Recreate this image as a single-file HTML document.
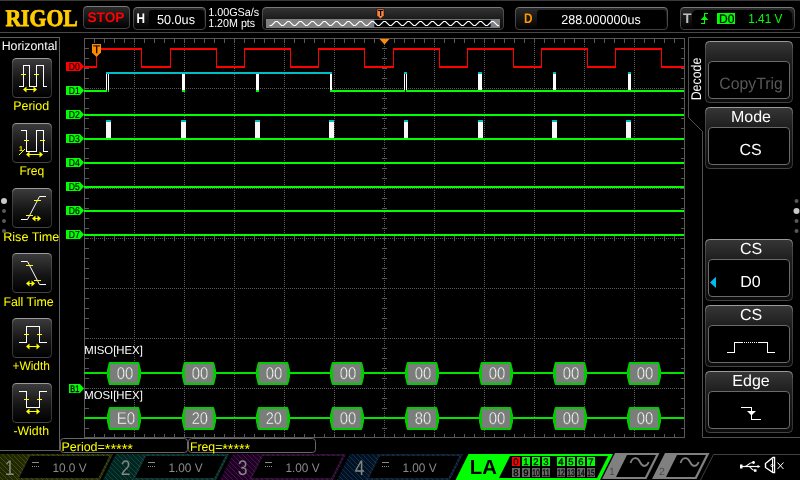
<!DOCTYPE html>
<html lang="en"><head><meta charset="utf-8"><title>RIGOL</title>
<style>
html,body{margin:0;padding:0;background:#000;width:800px;height:480px;overflow:hidden}
svg{display:block;position:absolute;left:0;top:0;will-change:transform}
text{font-family:"Liberation Sans",sans-serif;text-rendering:geometricPrecision}
.c{shape-rendering:crispEdges}
</style></head><body>
<svg width="800" height="480" viewBox="0 0 800 480">
<defs>
<linearGradient id="gbtn" x1="0" y1="0" x2="0" y2="1"><stop offset="0" stop-color="#3c3c3c"/><stop offset="0.55" stop-color="#151515"/><stop offset="1" stop-color="#000"/></linearGradient>
<linearGradient id="ghdr" x1="0" y1="0" x2="0" y2="1"><stop offset="0" stop-color="#2c2c2c"/><stop offset="1" stop-color="#000"/></linearGradient>
<linearGradient id="gmem" x1="0" y1="0" x2="0" y2="1"><stop offset="0" stop-color="#343434"/><stop offset="0.5" stop-color="#1c1c1c"/><stop offset="1" stop-color="#0a0a0a"/></linearGradient>
<linearGradient id="gmenu" x1="0" y1="0" x2="0" y2="1"><stop offset="0" stop-color="#363636"/><stop offset="0.33" stop-color="#1e1e1e"/><stop offset="1" stop-color="#0c0c0c"/></linearGradient>
<linearGradient id="ghb" x1="0" y1="0" x2="0" y2="1"><stop offset="0" stop-color="#7a7a7a"/><stop offset="0.15" stop-color="#505050"/><stop offset="1" stop-color="#404040"/></linearGradient>
<linearGradient id="gbord" x1="0" y1="0" x2="0" y2="1"><stop offset="0" stop-color="#9a9a9a"/><stop offset="0.12" stop-color="#4a4a4a"/><stop offset="0.9" stop-color="#333"/><stop offset="1" stop-color="#444"/></linearGradient>
<pattern id="h1" width="5" height="5" patternUnits="userSpaceOnUse" shape-rendering="crispEdges"><rect width="5" height="5" fill="#202800"/><rect x="3" y="0" width="1" height="1" fill="#424818"/><rect x="4" y="1" width="1" height="1" fill="#424818"/><rect x="0" y="2" width="1" height="1" fill="#424818"/><rect x="1" y="3" width="1" height="1" fill="#424818"/><rect x="2" y="4" width="1" height="1" fill="#424818"/></pattern>
<pattern id="h2" width="5" height="5" patternUnits="userSpaceOnUse" shape-rendering="crispEdges"><rect width="5" height="5" fill="#002620"/><rect x="3" y="0" width="1" height="1" fill="#184242"/><rect x="4" y="1" width="1" height="1" fill="#184242"/><rect x="0" y="2" width="1" height="1" fill="#184242"/><rect x="1" y="3" width="1" height="1" fill="#184242"/><rect x="2" y="4" width="1" height="1" fill="#184242"/></pattern>
<pattern id="h3" width="5" height="5" patternUnits="userSpaceOnUse" shape-rendering="crispEdges"><rect width="5" height="5" fill="#200024"/><rect x="3" y="0" width="1" height="1" fill="#401646"/><rect x="4" y="1" width="1" height="1" fill="#401646"/><rect x="0" y="2" width="1" height="1" fill="#401646"/><rect x="1" y="3" width="1" height="1" fill="#401646"/><rect x="2" y="4" width="1" height="1" fill="#401646"/></pattern>
<pattern id="h4" width="5" height="5" patternUnits="userSpaceOnUse" shape-rendering="crispEdges"><rect width="5" height="5" fill="#001224"/><rect x="3" y="0" width="1" height="1" fill="#163046"/><rect x="4" y="1" width="1" height="1" fill="#163046"/><rect x="0" y="2" width="1" height="1" fill="#163046"/><rect x="1" y="3" width="1" height="1" fill="#163046"/><rect x="2" y="4" width="1" height="1" fill="#163046"/></pattern>
</defs>
<rect width="800" height="480" fill="#000"/>

<rect x="0" y="0" width="800" height="1" fill="#3a3a3a" class="c"/>
<rect x="0" y="32" width="800" height="1" fill="#484848" class="c"/>
<text x="5.4" y="26" font-size="24" fill="#ffcc00" font-weight="bold" textLength="72.4" lengthAdjust="spacingAndGlyphs" style='font-family:"Liberation Serif",serif' stroke="#ffcc00" stroke-width="0.8" stroke-linejoin="round">RIGOL</text>
<rect x="83.5" y="6.5" width="46" height="22" rx="3.5" fill="url(#ghdr)" stroke="url(#ghb)"/>
<text x="87.5" y="22" font-size="14" fill="#ff0000" font-weight="bold" textLength="37" lengthAdjust="spacingAndGlyphs">STOP</text>
<rect x="133.5" y="7.5" width="72" height="22" rx="3.5" fill="url(#ghdr)" stroke="url(#ghb)"/>
<rect x="149" y="10" width="55" height="18" rx="3" fill="#000"/>
<text x="136.5" y="23" font-size="14" fill="#fff" font-weight="bold" textLength="8.5" lengthAdjust="spacingAndGlyphs">H</text>
<text x="157" y="24" font-size="13" fill="#fff" textLength="38" lengthAdjust="spacingAndGlyphs">50.0us</text>
<text x="208.2" y="16" font-size="11.5" fill="#fff" textLength="51" lengthAdjust="spacingAndGlyphs">1.00GSa/s</text>
<text x="208.2" y="27" font-size="11.5" fill="#fff" textLength="47" lengthAdjust="spacingAndGlyphs">1.20M pts</text>
<rect x="262.5" y="7.5" width="241" height="22" rx="3.5" fill="url(#gmem)" stroke="url(#ghb)"/>
<rect x="266" y="19" width="108" height="9" fill="#808080" class="c"/>
<rect x="374" y="19" width="116" height="9" fill="#000" class="c"/>
<rect x="374" y="19" width="116" height="1" fill="#707070" class="c"/>
<rect x="374" y="27" width="116" height="1" fill="#707070" class="c"/>
<rect x="490" y="19" width="10" height="9" fill="#808080" class="c"/>
<rect x="374" y="20" width="1" height="7" fill="#103060" class="c"/>
<rect x="490" y="20" width="1" height="7" fill="#103060" class="c"/>
<clipPath id="cw"><rect x="267" y="19" width="232" height="9"/></clipPath>
<polyline clip-path="url(#cw)" fill="none" stroke="#fff" stroke-width="1.1" points="269.5,25.5 271.5,25.5 275.5,21.5 277.5,21.5 281.5,25.5 283.5,25.5 287.5,21.5 289.5,21.5 293.5,25.5 295.5,25.5 299.5,21.5 301.5,21.5 305.5,25.5 307.5,25.5 311.5,21.5 313.5,21.5 317.5,25.5 319.5,25.5 323.5,21.5 325.5,21.5 329.5,25.5 331.5,25.5 335.5,21.5 337.5,21.5 341.5,25.5 343.5,25.5 347.5,21.5 349.5,21.5 353.5,25.5 355.5,25.5 359.5,21.5 361.5,21.5 365.5,25.5 367.5,25.5 371.5,21.5 373.5,21.5 377.5,25.5 379.5,25.5 383.5,21.5 385.5,21.5 389.5,25.5 391.5,25.5 395.5,21.5 397.5,21.5 401.5,25.5 403.5,25.5 407.5,21.5 409.5,21.5 413.5,25.5 415.5,25.5 419.5,21.5 421.5,21.5 425.5,25.5 427.5,25.5 431.5,21.5 433.5,21.5 437.5,25.5 439.5,25.5 443.5,21.5 445.5,21.5 449.5,25.5 451.5,25.5 455.5,21.5 457.5,21.5 461.5,25.5 463.5,25.5 467.5,21.5 469.5,21.5 473.5,25.5 475.5,25.5 479.5,21.5 481.5,21.5 485.5,25.5 487.5,25.5 491.5,21.5 493.5,21.5 497.5,25.5 499.5,25.5"/>
<path d="M377,9 H384 V15.5 L380.5,19 L377,15.5 Z" fill="#ff8440" stroke="#1a0a00" stroke-width="0.6"/>
<text x="380.5" y="16.4" font-size="8.6" fill="#000" font-weight="bold" text-anchor="middle">T</text>
<rect x="515.5" y="7.5" width="152" height="22" rx="3.5" fill="url(#ghdr)" stroke="url(#ghb)"/>
<rect x="537" y="10" width="129" height="18" rx="3" fill="#000"/>
<text x="524" y="23" font-size="14" fill="#ff9900" font-weight="bold" textLength="8.5" lengthAdjust="spacingAndGlyphs">D</text>
<text x="561.2" y="24" font-size="13" fill="#fff" textLength="79.6" lengthAdjust="spacingAndGlyphs">288.000000us</text>
<rect x="680.5" y="7.5" width="114" height="22" rx="3.5" fill="url(#ghdr)" stroke="url(#ghb)"/>
<rect x="692" y="10" width="100" height="18" rx="5" fill="#000"/>
<text x="683" y="23" font-size="14" fill="#c0c0c0" font-weight="bold" textLength="8.5" lengthAdjust="spacingAndGlyphs">T</text>
<path class="c" d="M701,23.5 H704.5 V13.5 H708" fill="none" stroke="#00ff00" stroke-width="1"/>
<path d="M700.7,20 L704.5,15.8 L708.3,20 Z" fill="#00ff00"/>
<rect x="717" y="13" width="18" height="11" fill="#00ff00" class="c"/>
<text x="726.7" y="22.8" font-size="12.3" fill="#000" textLength="15.4" lengthAdjust="spacingAndGlyphs" text-anchor="middle" stroke="#000" stroke-width="0.2">D0</text>
<text x="748.3" y="23" font-size="13" fill="#00ff00" textLength="34" lengthAdjust="spacingAndGlyphs">1.41 V</text>
<path class="c" d="M0,37.5 H59.5 V450.5 H0" fill="none" stroke="#606060"/>
<text x="1.7" y="50" font-size="12.5" fill="#fff" textLength="55.6" lengthAdjust="spacingAndGlyphs">Horizontal</text>
<rect x="12.5" y="58.5" width="39" height="39" rx="3.5" fill="url(#gbtn)" stroke="url(#gbord)"/>
<text x="13.2" y="110" font-size="12.5" fill="#ffff00" textLength="36" lengthAdjust="spacingAndGlyphs">Period</text>
<rect x="12.5" y="123.5" width="39" height="39" rx="3.5" fill="url(#gbtn)" stroke="url(#gbord)"/>
<text x="19.4" y="175" font-size="12.5" fill="#ffff00" textLength="24.8" lengthAdjust="spacingAndGlyphs">Freq</text>
<rect x="12.5" y="188.5" width="39" height="39" rx="3.5" fill="url(#gbtn)" stroke="url(#gbord)"/>
<text x="3.2" y="241" font-size="12.5" fill="#ffff00" textLength="56.2" lengthAdjust="spacingAndGlyphs">Rise Time</text>
<rect x="12.5" y="253.5" width="39" height="39" rx="3.5" fill="url(#gbtn)" stroke="url(#gbord)"/>
<text x="3.4" y="306" font-size="12.5" fill="#ffff00" textLength="50.2" lengthAdjust="spacingAndGlyphs">Fall Time</text>
<rect x="12.5" y="318.5" width="39" height="39" rx="3.5" fill="url(#gbtn)" stroke="url(#gbord)"/>
<text x="12.4" y="370" font-size="12.5" fill="#ffff00" textLength="37.6" lengthAdjust="spacingAndGlyphs">+Width</text>
<rect x="12.5" y="383.5" width="39" height="39" rx="3.5" fill="url(#gbtn)" stroke="url(#gbord)"/>
<text x="13.4" y="435" font-size="12.5" fill="#ffff00" textLength="35.6" lengthAdjust="spacingAndGlyphs">-Width</text>
<path class="c" d="M19,86.5 H23.5 V65.5 H29.5 V86.5 H36.5 V65.5 H43.5 V86.5 H47" stroke="#fff" stroke-width="1" fill="none"/>
<path class="c" d="M21,74.5 H26 M34,74.5 H39" stroke="#ffff00" stroke-width="1" fill="none"/>
<path d="M23,89.5 L26.5,86.5 V92.5 Z M37,89.5 L33.5,86.5 V92.5 Z" fill="#ffff00"/>
<path class="c" d="M25,89.5 H35" stroke="#ffff00" stroke-width="1" fill="none"/>
<path class="c" d="M21,130.5 H26.5 V151.5 H36.5 V130.5 H43.5 V151.5 H48" stroke="#fff" stroke-width="1" fill="none"/>
<path class="c" d="M24,140.5 H29 M40,140.5 H45" stroke="#ffff00" stroke-width="1" fill="none"/>
<path d="M26,154.5 L29.5,151.5 V157.5 Z M43,154.5 L39.5,151.5 V157.5 Z" fill="#ffff00"/>
<path class="c" d="M28,154.5 H41" stroke="#ffff00" stroke-width="1" fill="none"/>
<text x="19" y="151.2" font-size="7" fill="#ffff00" font-weight="bold">1</text>
<path d="M19,155 L25,149" stroke="#ffff00" stroke-width="1" fill="none"/>
<path d="M21,219.5 H27.5 L39.5,196.5 H46" stroke="#fff" stroke-width="1" fill="none"/>
<path class="c" d="M34,200.5 H41 M26,215.5 H33" stroke="#ffff00" stroke-width="1" fill="none"/>
<path d="M32,218.5 L35.5,215.5 V221.5 Z M41,218.5 L37.5,215.5 V221.5 Z" fill="#ffff00"/>
<path class="c" d="M34,218.5 H39" stroke="#ffff00" stroke-width="1" fill="none"/>
<path d="M21,261.5 H27.5 L39.5,284.5 H46" stroke="#fff" stroke-width="1" fill="none"/>
<path class="c" d="M26,265.5 H33 M34,280.5 H41" stroke="#ffff00" stroke-width="1" fill="none"/>
<path d="M26,283.5 L29.5,280.5 V286.5 Z M35,283.5 L31.5,280.5 V286.5 Z" fill="#ffff00"/>
<path class="c" d="M28,283.5 H33" stroke="#ffff00" stroke-width="1" fill="none"/>
<path class="c" d="M19,342.5 H26.5 V326.5 H39.5 V342.5 H47" stroke="#fff" stroke-width="1" fill="none"/>
<path class="c" d="M24,334.5 H29 M37,334.5 H42" stroke="#ffff00" stroke-width="1" fill="none"/>
<path d="M26,346.5 L29.5,343.5 V349.5 Z M40,346.5 L36.5,343.5 V349.5 Z" fill="#ffff00"/>
<path class="c" d="M28,346.5 H38" stroke="#ffff00" stroke-width="1" fill="none"/>
<path class="c" d="M19,391.5 H26.5 V407.5 H39.5 V391.5 H47" stroke="#fff" stroke-width="1" fill="none"/>
<path class="c" d="M24,399.5 H29 M37,399.5 H42" stroke="#ffff00" stroke-width="1" fill="none"/>
<path d="M26,411.5 L29.5,408.5 V414.5 Z M40,411.5 L36.5,408.5 V414.5 Z" fill="#ffff00"/>
<path class="c" d="M28,411.5 H38" stroke="#ffff00" stroke-width="1" fill="none"/>
<circle cx="4" cy="201" r="3" fill="#c8c8c8"/>
<circle cx="4" cy="211" r="2" fill="#585858"/>
<circle cx="4" cy="221" r="2" fill="#585858"/>
<circle cx="4" cy="231" r="2" fill="#585858"/>
<circle cx="796.5" cy="211" r="3" fill="#c8c8c8"/>
<circle cx="796.5" cy="201" r="2" fill="#585858"/>
<circle cx="796.5" cy="221" r="2" fill="#585858"/>
<circle cx="796.5" cy="231" r="2" fill="#585858"/>
<g class="c">
<line x1="134.5" y1="38" x2="134.5" y2="438" stroke="#5a5a5a" stroke-width="1" stroke-dasharray="1 1"/>
<line x1="184.5" y1="38" x2="184.5" y2="438" stroke="#5a5a5a" stroke-width="1" stroke-dasharray="1 1"/>
<line x1="234.5" y1="38" x2="234.5" y2="438" stroke="#5a5a5a" stroke-width="1" stroke-dasharray="1 1"/>
<line x1="284.5" y1="38" x2="284.5" y2="438" stroke="#5a5a5a" stroke-width="1" stroke-dasharray="1 1"/>
<line x1="334.5" y1="38" x2="334.5" y2="438" stroke="#5a5a5a" stroke-width="1" stroke-dasharray="1 1"/>
<line x1="384.5" y1="38" x2="384.5" y2="438" stroke="#5a5a5a" stroke-width="1" stroke-dasharray="1 1"/>
<line x1="434.5" y1="38" x2="434.5" y2="438" stroke="#5a5a5a" stroke-width="1" stroke-dasharray="1 1"/>
<line x1="484.5" y1="38" x2="484.5" y2="438" stroke="#5a5a5a" stroke-width="1" stroke-dasharray="1 1"/>
<line x1="534.5" y1="38" x2="534.5" y2="438" stroke="#5a5a5a" stroke-width="1" stroke-dasharray="1 1"/>
<line x1="584.5" y1="38" x2="584.5" y2="438" stroke="#5a5a5a" stroke-width="1" stroke-dasharray="1 1"/>
<line x1="634.5" y1="38" x2="634.5" y2="438" stroke="#5a5a5a" stroke-width="1" stroke-dasharray="1 1"/>
<line x1="84" y1="88.5" x2="684" y2="88.5" stroke="#5a5a5a" stroke-width="1" stroke-dasharray="1 1"/>
<line x1="84" y1="138.5" x2="684" y2="138.5" stroke="#5a5a5a" stroke-width="1" stroke-dasharray="1 1"/>
<line x1="84" y1="188.5" x2="684" y2="188.5" stroke="#5a5a5a" stroke-width="1" stroke-dasharray="1 1"/>
<line x1="84" y1="238.5" x2="684" y2="238.5" stroke="#5a5a5a" stroke-width="1" stroke-dasharray="1 1"/>
<line x1="84" y1="288.5" x2="684" y2="288.5" stroke="#5a5a5a" stroke-width="1" stroke-dasharray="1 1"/>
<line x1="84" y1="338.5" x2="684" y2="338.5" stroke="#5a5a5a" stroke-width="1" stroke-dasharray="1 1"/>
<line x1="84" y1="388.5" x2="684" y2="388.5" stroke="#5a5a5a" stroke-width="1" stroke-dasharray="1 1"/>
<rect x="94" y="39" width="1" height="4" fill="#585858" />
<rect x="94" y="434" width="1" height="4" fill="#585858" />
<rect x="94" y="236" width="1" height="5" fill="#585858" />
<rect x="104" y="39" width="1" height="4" fill="#585858" />
<rect x="104" y="434" width="1" height="4" fill="#585858" />
<rect x="104" y="236" width="1" height="5" fill="#585858" />
<rect x="114" y="39" width="1" height="4" fill="#585858" />
<rect x="114" y="434" width="1" height="4" fill="#585858" />
<rect x="114" y="236" width="1" height="5" fill="#585858" />
<rect x="124" y="39" width="1" height="4" fill="#585858" />
<rect x="124" y="434" width="1" height="4" fill="#585858" />
<rect x="124" y="236" width="1" height="5" fill="#585858" />
<rect x="134" y="39" width="1" height="4" fill="#585858" />
<rect x="134" y="434" width="1" height="4" fill="#585858" />
<rect x="134" y="236" width="1" height="5" fill="#585858" />
<rect x="144" y="39" width="1" height="4" fill="#585858" />
<rect x="144" y="434" width="1" height="4" fill="#585858" />
<rect x="144" y="236" width="1" height="5" fill="#585858" />
<rect x="154" y="39" width="1" height="4" fill="#585858" />
<rect x="154" y="434" width="1" height="4" fill="#585858" />
<rect x="154" y="236" width="1" height="5" fill="#585858" />
<rect x="164" y="39" width="1" height="4" fill="#585858" />
<rect x="164" y="434" width="1" height="4" fill="#585858" />
<rect x="164" y="236" width="1" height="5" fill="#585858" />
<rect x="174" y="39" width="1" height="4" fill="#585858" />
<rect x="174" y="434" width="1" height="4" fill="#585858" />
<rect x="174" y="236" width="1" height="5" fill="#585858" />
<rect x="184" y="39" width="1" height="4" fill="#585858" />
<rect x="184" y="434" width="1" height="4" fill="#585858" />
<rect x="184" y="236" width="1" height="5" fill="#585858" />
<rect x="194" y="39" width="1" height="4" fill="#585858" />
<rect x="194" y="434" width="1" height="4" fill="#585858" />
<rect x="194" y="236" width="1" height="5" fill="#585858" />
<rect x="204" y="39" width="1" height="4" fill="#585858" />
<rect x="204" y="434" width="1" height="4" fill="#585858" />
<rect x="204" y="236" width="1" height="5" fill="#585858" />
<rect x="214" y="39" width="1" height="4" fill="#585858" />
<rect x="214" y="434" width="1" height="4" fill="#585858" />
<rect x="214" y="236" width="1" height="5" fill="#585858" />
<rect x="224" y="39" width="1" height="4" fill="#585858" />
<rect x="224" y="434" width="1" height="4" fill="#585858" />
<rect x="224" y="236" width="1" height="5" fill="#585858" />
<rect x="234" y="39" width="1" height="4" fill="#585858" />
<rect x="234" y="434" width="1" height="4" fill="#585858" />
<rect x="234" y="236" width="1" height="5" fill="#585858" />
<rect x="244" y="39" width="1" height="4" fill="#585858" />
<rect x="244" y="434" width="1" height="4" fill="#585858" />
<rect x="244" y="236" width="1" height="5" fill="#585858" />
<rect x="254" y="39" width="1" height="4" fill="#585858" />
<rect x="254" y="434" width="1" height="4" fill="#585858" />
<rect x="254" y="236" width="1" height="5" fill="#585858" />
<rect x="264" y="39" width="1" height="4" fill="#585858" />
<rect x="264" y="434" width="1" height="4" fill="#585858" />
<rect x="264" y="236" width="1" height="5" fill="#585858" />
<rect x="274" y="39" width="1" height="4" fill="#585858" />
<rect x="274" y="434" width="1" height="4" fill="#585858" />
<rect x="274" y="236" width="1" height="5" fill="#585858" />
<rect x="284" y="39" width="1" height="4" fill="#585858" />
<rect x="284" y="434" width="1" height="4" fill="#585858" />
<rect x="284" y="236" width="1" height="5" fill="#585858" />
<rect x="294" y="39" width="1" height="4" fill="#585858" />
<rect x="294" y="434" width="1" height="4" fill="#585858" />
<rect x="294" y="236" width="1" height="5" fill="#585858" />
<rect x="304" y="39" width="1" height="4" fill="#585858" />
<rect x="304" y="434" width="1" height="4" fill="#585858" />
<rect x="304" y="236" width="1" height="5" fill="#585858" />
<rect x="314" y="39" width="1" height="4" fill="#585858" />
<rect x="314" y="434" width="1" height="4" fill="#585858" />
<rect x="314" y="236" width="1" height="5" fill="#585858" />
<rect x="324" y="39" width="1" height="4" fill="#585858" />
<rect x="324" y="434" width="1" height="4" fill="#585858" />
<rect x="324" y="236" width="1" height="5" fill="#585858" />
<rect x="334" y="39" width="1" height="4" fill="#585858" />
<rect x="334" y="434" width="1" height="4" fill="#585858" />
<rect x="334" y="236" width="1" height="5" fill="#585858" />
<rect x="344" y="39" width="1" height="4" fill="#585858" />
<rect x="344" y="434" width="1" height="4" fill="#585858" />
<rect x="344" y="236" width="1" height="5" fill="#585858" />
<rect x="354" y="39" width="1" height="4" fill="#585858" />
<rect x="354" y="434" width="1" height="4" fill="#585858" />
<rect x="354" y="236" width="1" height="5" fill="#585858" />
<rect x="364" y="39" width="1" height="4" fill="#585858" />
<rect x="364" y="434" width="1" height="4" fill="#585858" />
<rect x="364" y="236" width="1" height="5" fill="#585858" />
<rect x="374" y="39" width="1" height="4" fill="#585858" />
<rect x="374" y="434" width="1" height="4" fill="#585858" />
<rect x="374" y="236" width="1" height="5" fill="#585858" />
<rect x="384" y="39" width="1" height="4" fill="#585858" />
<rect x="384" y="434" width="1" height="4" fill="#585858" />
<rect x="384" y="236" width="1" height="5" fill="#585858" />
<rect x="394" y="39" width="1" height="4" fill="#585858" />
<rect x="394" y="434" width="1" height="4" fill="#585858" />
<rect x="394" y="236" width="1" height="5" fill="#585858" />
<rect x="404" y="39" width="1" height="4" fill="#585858" />
<rect x="404" y="434" width="1" height="4" fill="#585858" />
<rect x="404" y="236" width="1" height="5" fill="#585858" />
<rect x="414" y="39" width="1" height="4" fill="#585858" />
<rect x="414" y="434" width="1" height="4" fill="#585858" />
<rect x="414" y="236" width="1" height="5" fill="#585858" />
<rect x="424" y="39" width="1" height="4" fill="#585858" />
<rect x="424" y="434" width="1" height="4" fill="#585858" />
<rect x="424" y="236" width="1" height="5" fill="#585858" />
<rect x="434" y="39" width="1" height="4" fill="#585858" />
<rect x="434" y="434" width="1" height="4" fill="#585858" />
<rect x="434" y="236" width="1" height="5" fill="#585858" />
<rect x="444" y="39" width="1" height="4" fill="#585858" />
<rect x="444" y="434" width="1" height="4" fill="#585858" />
<rect x="444" y="236" width="1" height="5" fill="#585858" />
<rect x="454" y="39" width="1" height="4" fill="#585858" />
<rect x="454" y="434" width="1" height="4" fill="#585858" />
<rect x="454" y="236" width="1" height="5" fill="#585858" />
<rect x="464" y="39" width="1" height="4" fill="#585858" />
<rect x="464" y="434" width="1" height="4" fill="#585858" />
<rect x="464" y="236" width="1" height="5" fill="#585858" />
<rect x="474" y="39" width="1" height="4" fill="#585858" />
<rect x="474" y="434" width="1" height="4" fill="#585858" />
<rect x="474" y="236" width="1" height="5" fill="#585858" />
<rect x="484" y="39" width="1" height="4" fill="#585858" />
<rect x="484" y="434" width="1" height="4" fill="#585858" />
<rect x="484" y="236" width="1" height="5" fill="#585858" />
<rect x="494" y="39" width="1" height="4" fill="#585858" />
<rect x="494" y="434" width="1" height="4" fill="#585858" />
<rect x="494" y="236" width="1" height="5" fill="#585858" />
<rect x="504" y="39" width="1" height="4" fill="#585858" />
<rect x="504" y="434" width="1" height="4" fill="#585858" />
<rect x="504" y="236" width="1" height="5" fill="#585858" />
<rect x="514" y="39" width="1" height="4" fill="#585858" />
<rect x="514" y="434" width="1" height="4" fill="#585858" />
<rect x="514" y="236" width="1" height="5" fill="#585858" />
<rect x="524" y="39" width="1" height="4" fill="#585858" />
<rect x="524" y="434" width="1" height="4" fill="#585858" />
<rect x="524" y="236" width="1" height="5" fill="#585858" />
<rect x="534" y="39" width="1" height="4" fill="#585858" />
<rect x="534" y="434" width="1" height="4" fill="#585858" />
<rect x="534" y="236" width="1" height="5" fill="#585858" />
<rect x="544" y="39" width="1" height="4" fill="#585858" />
<rect x="544" y="434" width="1" height="4" fill="#585858" />
<rect x="544" y="236" width="1" height="5" fill="#585858" />
<rect x="554" y="39" width="1" height="4" fill="#585858" />
<rect x="554" y="434" width="1" height="4" fill="#585858" />
<rect x="554" y="236" width="1" height="5" fill="#585858" />
<rect x="564" y="39" width="1" height="4" fill="#585858" />
<rect x="564" y="434" width="1" height="4" fill="#585858" />
<rect x="564" y="236" width="1" height="5" fill="#585858" />
<rect x="574" y="39" width="1" height="4" fill="#585858" />
<rect x="574" y="434" width="1" height="4" fill="#585858" />
<rect x="574" y="236" width="1" height="5" fill="#585858" />
<rect x="584" y="39" width="1" height="4" fill="#585858" />
<rect x="584" y="434" width="1" height="4" fill="#585858" />
<rect x="584" y="236" width="1" height="5" fill="#585858" />
<rect x="594" y="39" width="1" height="4" fill="#585858" />
<rect x="594" y="434" width="1" height="4" fill="#585858" />
<rect x="594" y="236" width="1" height="5" fill="#585858" />
<rect x="604" y="39" width="1" height="4" fill="#585858" />
<rect x="604" y="434" width="1" height="4" fill="#585858" />
<rect x="604" y="236" width="1" height="5" fill="#585858" />
<rect x="614" y="39" width="1" height="4" fill="#585858" />
<rect x="614" y="434" width="1" height="4" fill="#585858" />
<rect x="614" y="236" width="1" height="5" fill="#585858" />
<rect x="624" y="39" width="1" height="4" fill="#585858" />
<rect x="624" y="434" width="1" height="4" fill="#585858" />
<rect x="624" y="236" width="1" height="5" fill="#585858" />
<rect x="634" y="39" width="1" height="4" fill="#585858" />
<rect x="634" y="434" width="1" height="4" fill="#585858" />
<rect x="634" y="236" width="1" height="5" fill="#585858" />
<rect x="644" y="39" width="1" height="4" fill="#585858" />
<rect x="644" y="434" width="1" height="4" fill="#585858" />
<rect x="644" y="236" width="1" height="5" fill="#585858" />
<rect x="654" y="39" width="1" height="4" fill="#585858" />
<rect x="654" y="434" width="1" height="4" fill="#585858" />
<rect x="654" y="236" width="1" height="5" fill="#585858" />
<rect x="664" y="39" width="1" height="4" fill="#585858" />
<rect x="664" y="434" width="1" height="4" fill="#585858" />
<rect x="664" y="236" width="1" height="5" fill="#585858" />
<rect x="674" y="39" width="1" height="4" fill="#585858" />
<rect x="674" y="434" width="1" height="4" fill="#585858" />
<rect x="674" y="236" width="1" height="5" fill="#585858" />
<rect x="85" y="48" width="4" height="1" fill="#585858" />
<rect x="681" y="48" width="3" height="1" fill="#585858" />
<rect x="382" y="48" width="5" height="1" fill="#585858" />
<rect x="85" y="58" width="4" height="1" fill="#585858" />
<rect x="681" y="58" width="3" height="1" fill="#585858" />
<rect x="382" y="58" width="5" height="1" fill="#585858" />
<rect x="85" y="68" width="4" height="1" fill="#585858" />
<rect x="681" y="68" width="3" height="1" fill="#585858" />
<rect x="382" y="68" width="5" height="1" fill="#585858" />
<rect x="85" y="78" width="4" height="1" fill="#585858" />
<rect x="681" y="78" width="3" height="1" fill="#585858" />
<rect x="382" y="78" width="5" height="1" fill="#585858" />
<rect x="85" y="88" width="4" height="1" fill="#585858" />
<rect x="681" y="88" width="3" height="1" fill="#585858" />
<rect x="382" y="88" width="5" height="1" fill="#585858" />
<rect x="85" y="98" width="4" height="1" fill="#585858" />
<rect x="681" y="98" width="3" height="1" fill="#585858" />
<rect x="382" y="98" width="5" height="1" fill="#585858" />
<rect x="85" y="108" width="4" height="1" fill="#585858" />
<rect x="681" y="108" width="3" height="1" fill="#585858" />
<rect x="382" y="108" width="5" height="1" fill="#585858" />
<rect x="85" y="118" width="4" height="1" fill="#585858" />
<rect x="681" y="118" width="3" height="1" fill="#585858" />
<rect x="382" y="118" width="5" height="1" fill="#585858" />
<rect x="85" y="128" width="4" height="1" fill="#585858" />
<rect x="681" y="128" width="3" height="1" fill="#585858" />
<rect x="382" y="128" width="5" height="1" fill="#585858" />
<rect x="85" y="138" width="4" height="1" fill="#585858" />
<rect x="681" y="138" width="3" height="1" fill="#585858" />
<rect x="382" y="138" width="5" height="1" fill="#585858" />
<rect x="85" y="148" width="4" height="1" fill="#585858" />
<rect x="681" y="148" width="3" height="1" fill="#585858" />
<rect x="382" y="148" width="5" height="1" fill="#585858" />
<rect x="85" y="158" width="4" height="1" fill="#585858" />
<rect x="681" y="158" width="3" height="1" fill="#585858" />
<rect x="382" y="158" width="5" height="1" fill="#585858" />
<rect x="85" y="168" width="4" height="1" fill="#585858" />
<rect x="681" y="168" width="3" height="1" fill="#585858" />
<rect x="382" y="168" width="5" height="1" fill="#585858" />
<rect x="85" y="178" width="4" height="1" fill="#585858" />
<rect x="681" y="178" width="3" height="1" fill="#585858" />
<rect x="382" y="178" width="5" height="1" fill="#585858" />
<rect x="85" y="188" width="4" height="1" fill="#585858" />
<rect x="681" y="188" width="3" height="1" fill="#585858" />
<rect x="382" y="188" width="5" height="1" fill="#585858" />
<rect x="85" y="198" width="4" height="1" fill="#585858" />
<rect x="681" y="198" width="3" height="1" fill="#585858" />
<rect x="382" y="198" width="5" height="1" fill="#585858" />
<rect x="85" y="208" width="4" height="1" fill="#585858" />
<rect x="681" y="208" width="3" height="1" fill="#585858" />
<rect x="382" y="208" width="5" height="1" fill="#585858" />
<rect x="85" y="218" width="4" height="1" fill="#585858" />
<rect x="681" y="218" width="3" height="1" fill="#585858" />
<rect x="382" y="218" width="5" height="1" fill="#585858" />
<rect x="85" y="228" width="4" height="1" fill="#585858" />
<rect x="681" y="228" width="3" height="1" fill="#585858" />
<rect x="382" y="228" width="5" height="1" fill="#585858" />
<rect x="85" y="238" width="4" height="1" fill="#585858" />
<rect x="681" y="238" width="3" height="1" fill="#585858" />
<rect x="382" y="238" width="5" height="1" fill="#585858" />
<rect x="85" y="248" width="4" height="1" fill="#585858" />
<rect x="681" y="248" width="3" height="1" fill="#585858" />
<rect x="382" y="248" width="5" height="1" fill="#585858" />
<rect x="85" y="258" width="4" height="1" fill="#585858" />
<rect x="681" y="258" width="3" height="1" fill="#585858" />
<rect x="382" y="258" width="5" height="1" fill="#585858" />
<rect x="85" y="268" width="4" height="1" fill="#585858" />
<rect x="681" y="268" width="3" height="1" fill="#585858" />
<rect x="382" y="268" width="5" height="1" fill="#585858" />
<rect x="85" y="278" width="4" height="1" fill="#585858" />
<rect x="681" y="278" width="3" height="1" fill="#585858" />
<rect x="382" y="278" width="5" height="1" fill="#585858" />
<rect x="85" y="288" width="4" height="1" fill="#585858" />
<rect x="681" y="288" width="3" height="1" fill="#585858" />
<rect x="382" y="288" width="5" height="1" fill="#585858" />
<rect x="85" y="298" width="4" height="1" fill="#585858" />
<rect x="681" y="298" width="3" height="1" fill="#585858" />
<rect x="382" y="298" width="5" height="1" fill="#585858" />
<rect x="85" y="308" width="4" height="1" fill="#585858" />
<rect x="681" y="308" width="3" height="1" fill="#585858" />
<rect x="382" y="308" width="5" height="1" fill="#585858" />
<rect x="85" y="318" width="4" height="1" fill="#585858" />
<rect x="681" y="318" width="3" height="1" fill="#585858" />
<rect x="382" y="318" width="5" height="1" fill="#585858" />
<rect x="85" y="328" width="4" height="1" fill="#585858" />
<rect x="681" y="328" width="3" height="1" fill="#585858" />
<rect x="382" y="328" width="5" height="1" fill="#585858" />
<rect x="85" y="338" width="4" height="1" fill="#585858" />
<rect x="681" y="338" width="3" height="1" fill="#585858" />
<rect x="382" y="338" width="5" height="1" fill="#585858" />
<rect x="85" y="348" width="4" height="1" fill="#585858" />
<rect x="681" y="348" width="3" height="1" fill="#585858" />
<rect x="382" y="348" width="5" height="1" fill="#585858" />
<rect x="85" y="358" width="4" height="1" fill="#585858" />
<rect x="681" y="358" width="3" height="1" fill="#585858" />
<rect x="382" y="358" width="5" height="1" fill="#585858" />
<rect x="85" y="368" width="4" height="1" fill="#585858" />
<rect x="681" y="368" width="3" height="1" fill="#585858" />
<rect x="382" y="368" width="5" height="1" fill="#585858" />
<rect x="85" y="378" width="4" height="1" fill="#585858" />
<rect x="681" y="378" width="3" height="1" fill="#585858" />
<rect x="382" y="378" width="5" height="1" fill="#585858" />
<rect x="85" y="388" width="4" height="1" fill="#585858" />
<rect x="681" y="388" width="3" height="1" fill="#585858" />
<rect x="382" y="388" width="5" height="1" fill="#585858" />
<rect x="85" y="398" width="4" height="1" fill="#585858" />
<rect x="681" y="398" width="3" height="1" fill="#585858" />
<rect x="382" y="398" width="5" height="1" fill="#585858" />
<rect x="85" y="408" width="4" height="1" fill="#585858" />
<rect x="681" y="408" width="3" height="1" fill="#585858" />
<rect x="382" y="408" width="5" height="1" fill="#585858" />
<rect x="85" y="418" width="4" height="1" fill="#585858" />
<rect x="681" y="418" width="3" height="1" fill="#585858" />
<rect x="382" y="418" width="5" height="1" fill="#585858" />
<rect x="85" y="428" width="4" height="1" fill="#585858" />
<rect x="681" y="428" width="3" height="1" fill="#585858" />
<rect x="382" y="428" width="5" height="1" fill="#585858" />
<rect x="84.5" y="38.5" width="600" height="399" fill="none" stroke="#585858"/>
</g>
<path d="M379.5,39 H389.5 L384.5,44.5 Z" fill="#ff8c00"/>
<g class="c">
<rect x="84" y="66" width="13" height="2" fill="#ff0000" />
<rect x="96" y="48" width="1" height="20" fill="#ff0000" />
<rect x="96" y="48" width="46" height="2" fill="#ff0000" />
<rect x="141" y="48" width="1" height="20" fill="#ff0000" />
<rect x="141" y="66" width="30" height="2" fill="#ff0000" />
<rect x="170" y="48" width="1" height="20" fill="#ff0000" />
<rect x="170" y="48" width="47" height="2" fill="#ff0000" />
<rect x="216" y="48" width="1" height="20" fill="#ff0000" />
<rect x="216" y="66" width="29" height="2" fill="#ff0000" />
<rect x="244" y="48" width="1" height="20" fill="#ff0000" />
<rect x="244" y="48" width="47" height="2" fill="#ff0000" />
<rect x="290" y="48" width="1" height="20" fill="#ff0000" />
<rect x="290" y="66" width="29" height="2" fill="#ff0000" />
<rect x="318" y="48" width="1" height="20" fill="#ff0000" />
<rect x="318" y="48" width="47" height="2" fill="#ff0000" />
<rect x="364" y="48" width="1" height="20" fill="#ff0000" />
<rect x="364" y="66" width="30" height="2" fill="#ff0000" />
<rect x="393" y="48" width="1" height="20" fill="#ff0000" />
<rect x="393" y="48" width="47" height="2" fill="#ff0000" />
<rect x="439" y="48" width="1" height="20" fill="#ff0000" />
<rect x="439" y="66" width="29" height="2" fill="#ff0000" />
<rect x="467" y="48" width="1" height="20" fill="#ff0000" />
<rect x="467" y="48" width="47" height="2" fill="#ff0000" />
<rect x="513" y="48" width="1" height="20" fill="#ff0000" />
<rect x="513" y="66" width="29" height="2" fill="#ff0000" />
<rect x="541" y="48" width="1" height="20" fill="#ff0000" />
<rect x="541" y="48" width="47" height="2" fill="#ff0000" />
<rect x="587" y="48" width="1" height="20" fill="#ff0000" />
<rect x="587" y="66" width="29" height="2" fill="#ff0000" />
<rect x="615" y="48" width="1" height="20" fill="#ff0000" />
<rect x="615" y="48" width="47" height="2" fill="#ff0000" />
<rect x="661" y="48" width="1" height="20" fill="#ff0000" />
<rect x="661" y="66" width="23" height="2" fill="#ff0000" />
<rect x="84" y="114" width="600" height="2" fill="#00ff00" />
<rect x="84" y="138" width="600" height="2" fill="#00ff00" />
<rect x="84" y="162" width="600" height="2" fill="#00ff00" />
<rect x="84" y="186" width="600" height="2" fill="#00ff00" />
<rect x="84" y="210" width="600" height="2" fill="#00ff00" />
<rect x="84" y="234" width="600" height="2" fill="#00ff00" />
<rect x="84" y="90" width="23" height="2" fill="#00ff00" />
<rect x="106" y="72" width="226" height="2" fill="#00bec8" />
<rect x="106" y="74" width="1" height="16" fill="#fff" />
<rect x="108" y="74" width="1" height="16" fill="#fff" />
<rect x="108" y="90" width="1" height="2" fill="#00ff00" />
<rect x="182" y="74" width="3" height="16" fill="#fff" />
<rect x="182" y="90" width="3" height="2" fill="#00ff00" />
<rect x="256" y="74" width="3" height="16" fill="#fff" />
<rect x="256" y="90" width="3" height="2" fill="#00ff00" />
<rect x="330" y="74" width="2" height="16" fill="#fff" />
<rect x="330" y="90" width="354" height="2" fill="#00ff00" />
<rect x="404" y="72" width="3" height="2" fill="#00bec8" />
<rect x="404" y="74" width="1" height="16" fill="#fff" />
<rect x="406" y="74" width="1" height="16" fill="#fff" />
<rect x="405" y="90" width="1" height="3" fill="#000" />
<rect x="478" y="72" width="4" height="2" fill="#00bec8" />
<rect x="478" y="74" width="4" height="16" fill="#fff" />
<rect x="553" y="72" width="3" height="2" fill="#00bec8" />
<rect x="553" y="74" width="3" height="16" fill="#fff" />
<rect x="628" y="72" width="3" height="2" fill="#00bec8" />
<rect x="628" y="74" width="3" height="16" fill="#fff" />
<rect x="106" y="120" width="5" height="2" fill="#00bec8" />
<rect x="106" y="122" width="5" height="16" fill="#f8f8f8" />
<rect x="181" y="120" width="5" height="2" fill="#00bec8" />
<rect x="181" y="122" width="5" height="16" fill="#f8f8f8" />
<rect x="255" y="120" width="5" height="2" fill="#00bec8" />
<rect x="255" y="122" width="5" height="16" fill="#f8f8f8" />
<rect x="329" y="120" width="5" height="2" fill="#00bec8" />
<rect x="329" y="122" width="5" height="16" fill="#f8f8f8" />
<rect x="404" y="120" width="4" height="2" fill="#00bec8" />
<rect x="404" y="122" width="4" height="16" fill="#f8f8f8" />
<rect x="478" y="120" width="5" height="2" fill="#00bec8" />
<rect x="478" y="122" width="5" height="16" fill="#f8f8f8" />
<rect x="552" y="120" width="5" height="2" fill="#00bec8" />
<rect x="552" y="122" width="5" height="16" fill="#f8f8f8" />
<rect x="626" y="120" width="5" height="2" fill="#00bec8" />
<rect x="626" y="122" width="5" height="16" fill="#f8f8f8" />
</g>
<path d="M66,62.0 H80 L84,66.5 L80,71.0 H66 Z" fill="#ff0000"/>
<text x="68.8" y="70.1" font-size="10" fill="#000" textLength="11" lengthAdjust="spacingAndGlyphs" stroke="#000" stroke-width="0.15">D0</text>
<path d="M66,86.0 H80 L84,90.5 L80,95.0 H66 Z" fill="#00ff00"/>
<text x="68.8" y="94.1" font-size="10" fill="#000" textLength="11" lengthAdjust="spacingAndGlyphs" stroke="#000" stroke-width="0.15">D1</text>
<path d="M66,110.0 H80 L84,114.5 L80,119.0 H66 Z" fill="#00ff00"/>
<text x="68.8" y="118.1" font-size="10" fill="#000" textLength="11" lengthAdjust="spacingAndGlyphs" stroke="#000" stroke-width="0.15">D2</text>
<path d="M66,134.0 H80 L84,138.5 L80,143.0 H66 Z" fill="#00ff00"/>
<text x="68.8" y="142.1" font-size="10" fill="#000" textLength="11" lengthAdjust="spacingAndGlyphs" stroke="#000" stroke-width="0.15">D3</text>
<path d="M66,158.0 H80 L84,162.5 L80,167.0 H66 Z" fill="#00ff00"/>
<text x="68.8" y="166.1" font-size="10" fill="#000" textLength="11" lengthAdjust="spacingAndGlyphs" stroke="#000" stroke-width="0.15">D4</text>
<path d="M66,182.0 H80 L84,186.5 L80,191.0 H66 Z" fill="#00ff00"/>
<text x="68.8" y="190.1" font-size="10" fill="#000" textLength="11" lengthAdjust="spacingAndGlyphs" stroke="#000" stroke-width="0.15">D5</text>
<path d="M66,206.0 H80 L84,210.5 L80,215.0 H66 Z" fill="#00ff00"/>
<text x="68.8" y="214.1" font-size="10" fill="#000" textLength="11" lengthAdjust="spacingAndGlyphs" stroke="#000" stroke-width="0.15">D6</text>
<path d="M66,230.0 H80 L84,234.5 L80,239.0 H66 Z" fill="#00ff00"/>
<text x="68.8" y="238.1" font-size="10" fill="#000" textLength="11" lengthAdjust="spacingAndGlyphs" stroke="#000" stroke-width="0.15">D7</text>
<path d="M69,384 H80 L84,388.5 L80,393 H69 Z" fill="#00ff00"/>
<text x="70.3" y="392.1" font-size="9.5" fill="#000" textLength="9" lengthAdjust="spacingAndGlyphs" stroke="#000" stroke-width="0.35">B1</text>
<path d="M92,44 H101 V52.5 L96.5,57 L92,52.5 Z" fill="#ff8c00"/>
<text x="96.5" y="53" font-size="11" fill="#000" text-anchor="middle" stroke="#000" stroke-width="0.25">T</text>
<rect x="84" y="372" width="600" height="2" fill="#00e400" class="c"/>
<path d="M109.3,362 H138.6 L139.6,364 L140.2,367 L141,370 V377 L140.2,380 L139.6,383 L138.6,385 H109.3 L108.4,383 L107.8,380 L107,377 V370 L107.8,367 L108.4,364 Z" fill="#00cc00"/>
<rect x="110" y="364" width="28" height="19" fill="#7a7e7a" class="c"/>
<text x="116.7" y="379.3" font-size="17" fill="#fff" textLength="16.6" lengthAdjust="spacingAndGlyphs" stroke="#7a7e7a" stroke-width="0.45">00</text>
<path d="M184.3,362 H213.6 L214.6,364 L215.2,367 L216,370 V377 L215.2,380 L214.6,383 L213.6,385 H184.3 L183.4,383 L182.8,380 L182,377 V370 L182.8,367 L183.4,364 Z" fill="#00cc00"/>
<rect x="185" y="364" width="28" height="19" fill="#7a7e7a" class="c"/>
<text x="191.7" y="379.3" font-size="17" fill="#fff" textLength="16.6" lengthAdjust="spacingAndGlyphs" stroke="#7a7e7a" stroke-width="0.45">00</text>
<path d="M258.3,362 H287.6 L288.6,364 L289.2,367 L290,370 V377 L289.2,380 L288.6,383 L287.6,385 H258.3 L257.4,383 L256.8,380 L256,377 V370 L256.8,367 L257.4,364 Z" fill="#00cc00"/>
<rect x="259" y="364" width="28" height="19" fill="#7a7e7a" class="c"/>
<text x="265.7" y="379.3" font-size="17" fill="#fff" textLength="16.6" lengthAdjust="spacingAndGlyphs" stroke="#7a7e7a" stroke-width="0.45">00</text>
<path d="M332.3,362 H361.6 L362.6,364 L363.2,367 L364,370 V377 L363.2,380 L362.6,383 L361.6,385 H332.3 L331.4,383 L330.8,380 L330,377 V370 L330.8,367 L331.4,364 Z" fill="#00cc00"/>
<rect x="333" y="364" width="28" height="19" fill="#7a7e7a" class="c"/>
<text x="339.7" y="379.3" font-size="17" fill="#fff" textLength="16.6" lengthAdjust="spacingAndGlyphs" stroke="#7a7e7a" stroke-width="0.45">00</text>
<path d="M407.3,362 H436.6 L437.6,364 L438.2,367 L439,370 V377 L438.2,380 L437.6,383 L436.6,385 H407.3 L406.4,383 L405.8,380 L405,377 V370 L405.8,367 L406.4,364 Z" fill="#00cc00"/>
<rect x="408" y="364" width="28" height="19" fill="#7a7e7a" class="c"/>
<text x="414.7" y="379.3" font-size="17" fill="#fff" textLength="16.6" lengthAdjust="spacingAndGlyphs" stroke="#7a7e7a" stroke-width="0.45">00</text>
<path d="M481.3,362 H510.6 L511.6,364 L512.2,367 L513,370 V377 L512.2,380 L511.6,383 L510.6,385 H481.3 L480.4,383 L479.8,380 L479,377 V370 L479.8,367 L480.4,364 Z" fill="#00cc00"/>
<rect x="482" y="364" width="28" height="19" fill="#7a7e7a" class="c"/>
<text x="488.7" y="379.3" font-size="17" fill="#fff" textLength="16.6" lengthAdjust="spacingAndGlyphs" stroke="#7a7e7a" stroke-width="0.45">00</text>
<path d="M555.3,362 H584.6 L585.6,364 L586.2,367 L587,370 V377 L586.2,380 L585.6,383 L584.6,385 H555.3 L554.4,383 L553.8,380 L553,377 V370 L553.8,367 L554.4,364 Z" fill="#00cc00"/>
<rect x="556" y="364" width="28" height="19" fill="#7a7e7a" class="c"/>
<text x="562.7" y="379.3" font-size="17" fill="#fff" textLength="16.6" lengthAdjust="spacingAndGlyphs" stroke="#7a7e7a" stroke-width="0.45">00</text>
<path d="M629.3,362 H658.6 L659.6,364 L660.2,367 L661,370 V377 L660.2,380 L659.6,383 L658.6,385 H629.3 L628.4,383 L627.8,380 L627,377 V370 L627.8,367 L628.4,364 Z" fill="#00cc00"/>
<rect x="630" y="364" width="28" height="19" fill="#7a7e7a" class="c"/>
<text x="636.7" y="379.3" font-size="17" fill="#fff" textLength="16.6" lengthAdjust="spacingAndGlyphs" stroke="#7a7e7a" stroke-width="0.45">00</text>
<text x="84.2" y="353.5" font-size="11.5" fill="#fff" textLength="58.6" lengthAdjust="spacingAndGlyphs">MISO[HEX]</text>
<rect x="84" y="417" width="600" height="2" fill="#00e400" class="c"/>
<path d="M109.3,407 H138.6 L139.6,409 L140.2,412 L141,415 V422 L140.2,425 L139.6,428 L138.6,430 H109.3 L108.4,428 L107.8,425 L107,422 V415 L107.8,412 L108.4,409 Z" fill="#00cc00"/>
<rect x="110" y="409" width="28" height="19" fill="#7a7e7a" class="c"/>
<text x="116.7" y="424.3" font-size="17" fill="#fff" textLength="18.5" lengthAdjust="spacingAndGlyphs" stroke="#7a7e7a" stroke-width="0.45">E0</text>
<path d="M184.3,407 H213.6 L214.6,409 L215.2,412 L216,415 V422 L215.2,425 L214.6,428 L213.6,430 H184.3 L183.4,428 L182.8,425 L182,422 V415 L182.8,412 L183.4,409 Z" fill="#00cc00"/>
<rect x="185" y="409" width="28" height="19" fill="#7a7e7a" class="c"/>
<text x="191.7" y="424.3" font-size="17" fill="#fff" textLength="16.3" lengthAdjust="spacingAndGlyphs" stroke="#7a7e7a" stroke-width="0.45">20</text>
<path d="M258.3,407 H287.6 L288.6,409 L289.2,412 L290,415 V422 L289.2,425 L288.6,428 L287.6,430 H258.3 L257.4,428 L256.8,425 L256,422 V415 L256.8,412 L257.4,409 Z" fill="#00cc00"/>
<rect x="259" y="409" width="28" height="19" fill="#7a7e7a" class="c"/>
<text x="265.7" y="424.3" font-size="17" fill="#fff" textLength="16.3" lengthAdjust="spacingAndGlyphs" stroke="#7a7e7a" stroke-width="0.45">20</text>
<path d="M332.3,407 H361.6 L362.6,409 L363.2,412 L364,415 V422 L363.2,425 L362.6,428 L361.6,430 H332.3 L331.4,428 L330.8,425 L330,422 V415 L330.8,412 L331.4,409 Z" fill="#00cc00"/>
<rect x="333" y="409" width="28" height="19" fill="#7a7e7a" class="c"/>
<text x="339.7" y="424.3" font-size="17" fill="#fff" textLength="16.6" lengthAdjust="spacingAndGlyphs" stroke="#7a7e7a" stroke-width="0.45">00</text>
<path d="M407.3,407 H436.6 L437.6,409 L438.2,412 L439,415 V422 L438.2,425 L437.6,428 L436.6,430 H407.3 L406.4,428 L405.8,425 L405,422 V415 L405.8,412 L406.4,409 Z" fill="#00cc00"/>
<rect x="408" y="409" width="28" height="19" fill="#7a7e7a" class="c"/>
<text x="414.7" y="424.3" font-size="17" fill="#fff" textLength="16.5" lengthAdjust="spacingAndGlyphs" stroke="#7a7e7a" stroke-width="0.45">80</text>
<path d="M481.3,407 H510.6 L511.6,409 L512.2,412 L513,415 V422 L512.2,425 L511.6,428 L510.6,430 H481.3 L480.4,428 L479.8,425 L479,422 V415 L479.8,412 L480.4,409 Z" fill="#00cc00"/>
<rect x="482" y="409" width="28" height="19" fill="#7a7e7a" class="c"/>
<text x="488.7" y="424.3" font-size="17" fill="#fff" textLength="16.6" lengthAdjust="spacingAndGlyphs" stroke="#7a7e7a" stroke-width="0.45">00</text>
<path d="M555.3,407 H584.6 L585.6,409 L586.2,412 L587,415 V422 L586.2,425 L585.6,428 L584.6,430 H555.3 L554.4,428 L553.8,425 L553,422 V415 L553.8,412 L554.4,409 Z" fill="#00cc00"/>
<rect x="556" y="409" width="28" height="19" fill="#7a7e7a" class="c"/>
<text x="562.7" y="424.3" font-size="17" fill="#fff" textLength="16.6" lengthAdjust="spacingAndGlyphs" stroke="#7a7e7a" stroke-width="0.45">00</text>
<path d="M629.3,407 H658.6 L659.6,409 L660.2,412 L661,415 V422 L660.2,425 L659.6,428 L658.6,430 H629.3 L628.4,428 L627.8,425 L627,422 V415 L627.8,412 L628.4,409 Z" fill="#00cc00"/>
<rect x="630" y="409" width="28" height="19" fill="#7a7e7a" class="c"/>
<text x="636.7" y="424.3" font-size="17" fill="#fff" textLength="16.6" lengthAdjust="spacingAndGlyphs" stroke="#7a7e7a" stroke-width="0.45">00</text>
<text x="84.2" y="398.5" font-size="11.5" fill="#fff" textLength="58.6" lengthAdjust="spacingAndGlyphs">MOSI[HEX]</text>
<rect x="60.5" y="438.5" width="127" height="14" rx="3" fill="#000" stroke="#686868"/>
<rect x="188.5" y="438.5" width="127" height="14" rx="3" fill="#000" stroke="#686868"/>
<text x="61.5" y="451" font-size="12.5" fill="#ffff00" textLength="71.5" lengthAdjust="spacingAndGlyphs">Period=<tspan dy="3.2" font-size="14.5">*****</tspan></text>
<text x="190" y="451" font-size="12.5" fill="#ffff00" textLength="60" lengthAdjust="spacingAndGlyphs">Freq=<tspan dy="3.2" font-size="14.5">*****</tspan></text>
<path d="M800,37.5 H688.5 V117.5 L702.5,131.5 V437.5 H800" fill="none" stroke="#505050"/>
<text transform="translate(701.3,100.3) rotate(-90)" font-size="14" fill="#fff" textLength="42.6" lengthAdjust="spacingAndGlyphs">Decode</text>
<rect x="705.5" y="41.5" width="87" height="61" rx="4" fill="url(#gmenu)" stroke="url(#gbord)"/>
<rect x="708.5" y="61.5" width="81" height="37" rx="3.5" fill="#000" stroke="#6a6a6a"/>
<text x="751" y="88.8" font-size="16.5" fill="#585858" textLength="63.5" lengthAdjust="spacingAndGlyphs" text-anchor="middle">CopyTrig</text>
<rect x="705.5" y="107.5" width="87" height="61" rx="4" fill="url(#gmenu)" stroke="url(#gbord)"/>
<rect x="708.5" y="127.5" width="81" height="37" rx="3.5" fill="#000" stroke="#6a6a6a"/>
<text x="751" y="122" font-size="16" fill="#fff" text-anchor="middle">Mode</text>
<text x="750.5" y="155" font-size="16" fill="#fff" text-anchor="middle">CS</text>
<rect x="705.5" y="239.5" width="87" height="61" rx="4" fill="url(#gmenu)" stroke="url(#gbord)"/>
<rect x="708.5" y="259.5" width="81" height="37" rx="3.5" fill="#000" stroke="#6a6a6a"/>
<text x="751" y="254" font-size="16" fill="#fff" text-anchor="middle">CS</text>
<text x="750.5" y="287" font-size="16" fill="#fff" text-anchor="middle">D0</text>
<path d="M710,282.4 L716,276.8 V288 Z" fill="#00bcf2"/>
<rect x="705.5" y="305.5" width="87" height="61" rx="4" fill="url(#gmenu)" stroke="url(#gbord)"/>
<rect x="708.5" y="325.5" width="81" height="37" rx="3.5" fill="#000" stroke="#6a6a6a"/>
<text x="751" y="320" font-size="16" fill="#fff" text-anchor="middle">CS</text>
<path class="c" d="M727,352.5 H734.5 V342.5 H742" stroke="#fff" fill="none"/>
<path class="c" d="M742,342.5 H759" stroke="#fff" fill="none" stroke-dasharray="1 1"/>
<path class="c" d="M759,342.5 H767.5 V352.5 H775" stroke="#fff" fill="none"/>
<rect x="705.5" y="371.5" width="87" height="61" rx="4" fill="url(#gmenu)" stroke="url(#gbord)"/>
<rect x="708.5" y="391.5" width="81" height="37" rx="3.5" fill="#000" stroke="#6a6a6a"/>
<text x="751" y="386" font-size="16" fill="#fff" text-anchor="middle">Edge</text>
<path class="c" d="M741,407.5 H751.5 V419.5 H761" stroke="#fff" fill="none"/>
<path d="M747,411 H756 L751.5,415.6 Z" fill="#fff"/>
<clipPath id="cb"><rect x="0" y="453" width="800" height="27"/></clipPath><g clip-path="url(#cb)">
<path d="M0,454 H113 L100,480 H-13 Z" fill="url(#h1)"/>
<path d="M28.5,454 H113 L100,480 H15.5 Z" fill="#fff" opacity="0.045"/>
<path d="M30,456 H109.3 L98.3,478 H19 Z" fill="#000"/>
<text x="9.6" y="475" font-size="21" fill="#868684" textLength="9.8" lengthAdjust="spacingAndGlyphs" text-anchor="middle">1</text>
<rect x="32" y="462" width="7" height="1" fill="#8a8a8a" class="c"/>
<line class="c" x1="32" y1="466.5" x2="40" y2="466.5" stroke="#8a8a8a" stroke-dasharray="1 1"/>
<text x="52.4" y="471.6" font-size="12.5" fill="#8a8a8a" textLength="34.2" lengthAdjust="spacingAndGlyphs">10.0 V</text>
<path d="M116,454 H229 L216,480 H103 Z" fill="url(#h2)"/>
<path d="M144.5,454 H229 L216,480 H131.5 Z" fill="#fff" opacity="0.045"/>
<path d="M146,456 H225.3 L214.3,478 H135 Z" fill="#000"/>
<text x="125.6" y="475" font-size="21" fill="#868684" textLength="9.8" lengthAdjust="spacingAndGlyphs" text-anchor="middle">2</text>
<rect x="148" y="462" width="7" height="1" fill="#8a8a8a" class="c"/>
<line class="c" x1="148" y1="466.5" x2="156" y2="466.5" stroke="#8a8a8a" stroke-dasharray="1 1"/>
<text x="168.4" y="471.6" font-size="12.5" fill="#8a8a8a" textLength="34.2" lengthAdjust="spacingAndGlyphs">1.00 V</text>
<path d="M233,454 H346 L333,480 H220 Z" fill="url(#h3)"/>
<path d="M261.5,454 H346 L333,480 H248.5 Z" fill="#fff" opacity="0.045"/>
<path d="M263,456 H342.3 L331.3,478 H252 Z" fill="#000"/>
<text x="242.6" y="475" font-size="21" fill="#868684" textLength="9.8" lengthAdjust="spacingAndGlyphs" text-anchor="middle">3</text>
<rect x="265" y="462" width="7" height="1" fill="#8a8a8a" class="c"/>
<line class="c" x1="265" y1="466.5" x2="273" y2="466.5" stroke="#8a8a8a" stroke-dasharray="1 1"/>
<text x="285.4" y="471.6" font-size="12.5" fill="#8a8a8a" textLength="34.2" lengthAdjust="spacingAndGlyphs">1.00 V</text>
<path d="M350,454 H463 L450,480 H337 Z" fill="url(#h4)"/>
<path d="M378.5,454 H463 L450,480 H365.5 Z" fill="#fff" opacity="0.045"/>
<path d="M380,456 H459.3 L448.3,478 H369 Z" fill="#000"/>
<text x="359.6" y="475" font-size="21" fill="#868684" textLength="9.8" lengthAdjust="spacingAndGlyphs" text-anchor="middle">4</text>
<rect x="382" y="462" width="7" height="1" fill="#8a8a8a" class="c"/>
<line class="c" x1="382" y1="466.5" x2="390" y2="466.5" stroke="#8a8a8a" stroke-dasharray="1 1"/>
<text x="402.4" y="471.6" font-size="12.5" fill="#8a8a8a" textLength="34.2" lengthAdjust="spacingAndGlyphs">1.00 V</text>
<path d="M468.5,454 H613 L600,480 H455.5 Z" fill="#00ff00"/>
<path d="M510,456 H608 L597,478 H499 Z" fill="#000"/>
<text x="469.8" y="474" font-size="20.5" fill="#000" font-weight="bold" textLength="27" lengthAdjust="spacingAndGlyphs">LA</text>
<rect x="512" y="457" width="8" height="9" fill="#ff0000" class="c"/>
<text x="516" y="465" font-size="9.5" fill="#000" text-anchor="middle" stroke="#000" stroke-width="0.3">0</text>
<rect x="512" y="468" width="8" height="9" fill="#666866" class="c"/>
<text x="516" y="476" font-size="9.5" fill="#000" text-anchor="middle" stroke="#000" stroke-width="0.25">8</text>
<rect x="522" y="457" width="8" height="9" fill="#00ff00" class="c"/>
<text x="526" y="465" font-size="9.5" fill="#000" text-anchor="middle" stroke="#000" stroke-width="0.3">1</text>
<rect x="522" y="468" width="8" height="9" fill="#666866" class="c"/>
<text x="526" y="476" font-size="9.5" fill="#000" text-anchor="middle" stroke="#000" stroke-width="0.25">9</text>
<rect x="532" y="457" width="8" height="9" fill="#00ff00" class="c"/>
<text x="536" y="465" font-size="9.5" fill="#000" text-anchor="middle" stroke="#000" stroke-width="0.3">2</text>
<rect x="532" y="468" width="8" height="9" fill="#666866" class="c"/>
<text x="536" y="476" font-size="9.5" fill="#000" textLength="7.4" lengthAdjust="spacingAndGlyphs" text-anchor="middle" stroke="#000" stroke-width="0.25">10</text>
<rect x="542" y="457" width="8" height="9" fill="#00ff00" class="c"/>
<text x="546" y="465" font-size="9.5" fill="#000" text-anchor="middle" stroke="#000" stroke-width="0.3">3</text>
<rect x="542" y="468" width="8" height="9" fill="#666866" class="c"/>
<text x="546" y="476" font-size="9.5" fill="#000" textLength="7.4" lengthAdjust="spacingAndGlyphs" text-anchor="middle" stroke="#000" stroke-width="0.25">11</text>
<rect x="557" y="457" width="8" height="9" fill="#00ff00" class="c"/>
<text x="561" y="465" font-size="9.5" fill="#000" text-anchor="middle" stroke="#000" stroke-width="0.3">4</text>
<rect x="557" y="468" width="8" height="9" fill="#666866" class="c"/>
<text x="561" y="476" font-size="9.5" fill="#000" textLength="7.4" lengthAdjust="spacingAndGlyphs" text-anchor="middle" stroke="#000" stroke-width="0.25">12</text>
<rect x="567" y="457" width="8" height="9" fill="#00ff00" class="c"/>
<text x="571" y="465" font-size="9.5" fill="#000" text-anchor="middle" stroke="#000" stroke-width="0.3">5</text>
<rect x="567" y="468" width="8" height="9" fill="#666866" class="c"/>
<text x="571" y="476" font-size="9.5" fill="#000" textLength="7.4" lengthAdjust="spacingAndGlyphs" text-anchor="middle" stroke="#000" stroke-width="0.25">13</text>
<rect x="577" y="457" width="8" height="9" fill="#00ff00" class="c"/>
<text x="581" y="465" font-size="9.5" fill="#000" text-anchor="middle" stroke="#000" stroke-width="0.3">6</text>
<rect x="577" y="468" width="8" height="9" fill="#666866" class="c"/>
<text x="581" y="476" font-size="9.5" fill="#000" textLength="7.4" lengthAdjust="spacingAndGlyphs" text-anchor="middle" stroke="#000" stroke-width="0.25">14</text>
<rect x="587" y="457" width="8" height="9" fill="#00ff00" class="c"/>
<text x="591" y="465" font-size="9.5" fill="#000" text-anchor="middle" stroke="#000" stroke-width="0.3">7</text>
<rect x="587" y="468" width="8" height="9" fill="#666866" class="c"/>
<text x="591" y="476" font-size="9.5" fill="#000" textLength="7.4" lengthAdjust="spacingAndGlyphs" text-anchor="middle" stroke="#000" stroke-width="0.25">15</text>
<path d="M615,453 H659.5 L646.5,479 H602 Z" fill="#808080"/>
<path d="M627,455 H656 L645,477 H616 Z" fill="#000"/>
<text x="612" y="474.7" font-size="10.5" fill="#4a4a4a" text-anchor="middle">1</text>
<path d="M630.5,463 C632.5,456.8 637.5,456.8 640,462 S646.5,467.4 648.7,462" stroke="#808080" stroke-width="1.8" fill="none"/>
<path d="M665,453 H709.5 L696.5,479 H652 Z" fill="#808080"/>
<path d="M677,455 H706 L695,477 H666 Z" fill="#000"/>
<text x="662" y="474.7" font-size="10.5" fill="#4a4a4a" text-anchor="middle">2</text>
<path d="M680.5,463 C682.5,456.8 687.5,456.8 690,462 S696.5,467.4 698.7,462" stroke="#808080" stroke-width="1.8" fill="none"/>
<path d="M800,454.5 H713.5 L700.5,480" fill="none" stroke="#404040"/>
<g stroke="#fff" fill="none" stroke-width="1.2"><path d="M741,466.5 H759"/><path d="M745,466.5 C748,466.5 748,462.5 753,462.5"/><path d="M749,466.5 C751,466.5 751,470.5 755,470.5"/></g>
<rect x="740" y="464.5" width="2.5" height="4" fill="#fff"/><circle cx="753.5" cy="462.5" r="1.4" fill="#fff"/><rect x="754" y="469.3" width="2.5" height="2.5" fill="#fff"/><path d="M757.5,465 L760.5,466.5 L757.5,468 Z" fill="#fff"/>
<g stroke="#fff" fill="none"><path d="M765.5,463.5 L773,457.5 H774.5 V472.5 H773 L765.5,467.5 Z" stroke-width="1.4"/><path d="M772.5,459 V472" stroke-width="1"/><circle cx="772" cy="465.5" r="1.2" stroke-width="0.8"/><path d="M777.5,462.5 L783.5,469 M783.5,462.5 L777.5,469" stroke-width="1"/></g>
</g>
</svg></body></html>
